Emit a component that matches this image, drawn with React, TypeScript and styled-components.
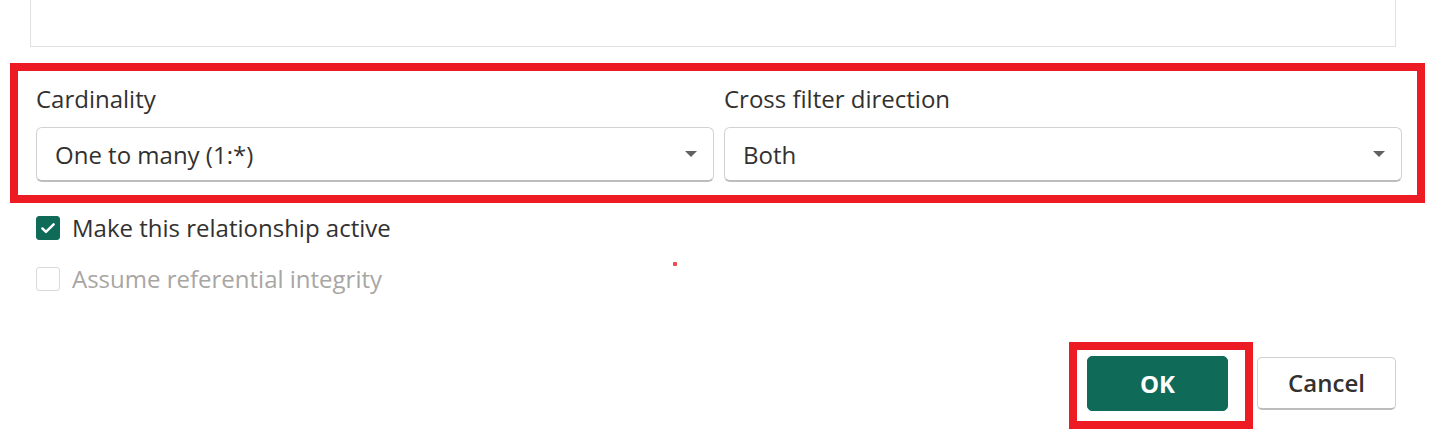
import React from "react";
import styled, { createGlobalStyle } from "styled-components";

const GlobalStyle = createGlobalStyle`
  html, body {
    margin: 0;
    padding: 0;
    background: #ffffff;
  }
  body {
    font-family: "Open Sans", "Noto Sans", "Liberation Sans", sans-serif;
    color: #323130;
  }
`;

const Page = styled.div`
  position: relative;
  width: 1436px;
  height: 444px;
  overflow: hidden;
  background: #ffffff;
`;

const TopField = styled.div`
  margin-left: 30px;
  width: 1364px;
  height: 46px;
  border: 1px solid #e1e1e1;
  border-top: none;
`;

const Highlight = styled.div<{ $pad: string }>`
  border: 8px solid #ed1c24;
  padding: ${(p) => p.$pad};
`;

const PropsFrame = styled(Highlight)`
  margin: 16px 0 0 10px;
  width: 1366px;
  height: 124px;
`;

const FieldGrid = styled.div`
  display: grid;
  grid-template-columns: 678px 678px;
  column-gap: 10px;
`;

const Field = styled.div`
  display: flex;
  flex-direction: column;
`;

const Label = styled.label`
  font-size: 24px;
  line-height: 55px;
  height: 56px;
  color: #323130;
`;

const Select = styled.div`
  height: 55px;
  box-sizing: border-box;
  display: flex;
  align-items: center;
  justify-content: space-between;
  padding: 0 16px 0 18px;
  border: 1px solid #d2d2d2;
  border-bottom: 2px solid #bdbdbd;
  border-radius: 6px;
  font-size: 24px;
  color: #323130;
`;

const Caret = styled.span`
  width: 0;
  height: 0;
  border-left: 6px solid transparent;
  border-right: 6px solid transparent;
  border-top: 6px solid #616161;
`;

const Options = styled.div`
  display: flex;
  flex-direction: column;
  gap: 26px;
  margin: 12px 0 0 36px;
`;

const CheckRow = styled.div<{ $disabled?: boolean }>`
  display: flex;
  align-items: center;
  gap: 12px;
  height: 25px;
  font-size: 24px;
  color: ${(p) => (p.$disabled ? "#a8a6a4" : "#323130")};
`;

const Box = styled.span<{ $checked?: boolean }>`
  width: 24px;
  height: 24px;
  box-sizing: border-box;
  border-radius: 3px;
  display: flex;
  align-items: center;
  justify-content: center;
  background: ${(p) => (p.$checked ? "#0f6b58" : "#ffffff")};
  border: 1px solid ${(p) => (p.$checked ? "#0f6b58" : "#d9d9d9")};
`;

const Footer = styled.div`
  display: flex;
  justify-content: flex-end;
  align-items: center;
  gap: 4px;
  margin: 51px 40px 0 0;
`;

const OkFrame = styled(Highlight)`
  display: flex;
`;

const Button = styled.button<{ $primary?: boolean }>`
  height: 55px;
  box-sizing: border-box;
  border-radius: 5px;
  font-family: "Open Sans", "Noto Sans", sans-serif;
  font-size: 24px;
  cursor: pointer;
  ${(p) =>
    p.$primary
      ? `
    width: 141px;
    background: #0f6b58;
    color: #ffffff;
    font-weight: 700;
    border: 1px solid #0f6b58;
    padding-bottom: 2px;
  `
      : `
    width: 139px;
    height: 53px;
    margin-bottom: 4px;
    padding-bottom: 3px;
    background: #ffffff;
    color: #323130;
    font-weight: 600;
    border: 1px solid #d0d0d0;
    border-bottom: 2px solid #bcbcbc;
  `}
`;

const Speck = styled.span`
  position: absolute;
  left: 673px;
  top: 262px;
  width: 4px;
  height: 4px;
  border-radius: 1px;
  background: #f04a4a;
`;

const Check = () => (
  <svg width="18" height="18" viewBox="0 0 16 16" fill="none">
    <path d="M3 8.4l3.2 3.1L13 4.7" stroke="#ffffff" strokeWidth="2.2" strokeLinecap="round" strokeLinejoin="round" />
  </svg>
);

export default function App() {
  return (
    <Page>
      <GlobalStyle />
      <TopField />
      <PropsFrame $pad="0 15px 0 18px">
        <FieldGrid>
          <Field>
            <Label>Cardinality</Label>
            <Select>
              <span>One to many (1:*)</span>
              <Caret />
            </Select>
          </Field>
          <Field>
            <Label>Cross filter direction</Label>
            <Select>
              <span>Both</span>
              <Caret />
            </Select>
          </Field>
        </FieldGrid>
      </PropsFrame>
      <Options>
        <CheckRow>
          <Box $checked>
            <Check />
          </Box>
          Make this relationship active
        </CheckRow>
        <CheckRow $disabled>
          <Box />
          Assume referential integrity
        </CheckRow>
      </Options>
      <Footer>
        <OkFrame $pad="6px 17px 10px 10px">
          <Button $primary>OK</Button>
        </OkFrame>
        <Button>Cancel</Button>
      </Footer>
      <Speck />
    </Page>
  );
}
